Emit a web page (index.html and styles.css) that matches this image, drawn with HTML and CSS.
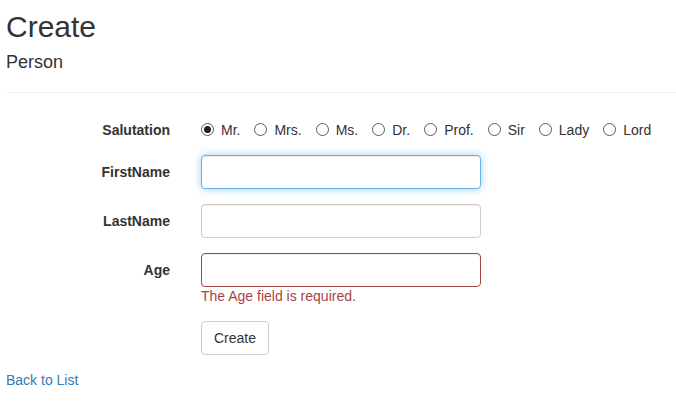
FILE: index.html
```html
<!DOCTYPE html>
<html>
<head>
<meta charset="utf-8">
<title>Create</title>
<link rel="stylesheet" href="styles.css">
</head>
<body>
<h2 class="title">Create</h2>
<h4 class="subtitle">Person</h4>
<hr class="divider">
<form class="form">
  <div class="form-group">
    <label class="control-label">Salutation</label>
    <div class="control radios">
      <span class="radio-item"><span class="radio checked"></span>Mr.</span>
      <span class="radio-item"><span class="radio"></span>Mrs.</span>
      <span class="radio-item"><span class="radio"></span>Ms.</span>
      <span class="radio-item"><span class="radio"></span>Dr.</span>
      <span class="radio-item"><span class="radio"></span>Prof.</span>
      <span class="radio-item"><span class="radio"></span>Sir</span>
      <span class="radio-item"><span class="radio"></span>Lady</span>
      <span class="radio-item"><span class="radio"></span>Lord</span>
    </div>
  </div>
  <div class="form-group">
    <label class="control-label">FirstName</label>
    <div class="control"><input class="form-control focused" type="text"></div>
  </div>
  <div class="form-group">
    <label class="control-label">LastName</label>
    <div class="control"><input class="form-control" type="text"></div>
  </div>
  <div class="form-group">
    <label class="control-label">Age</label>
    <div class="control">
      <input class="form-control invalid" type="text">
      <span class="field-error">The Age field is required.</span>
    </div>
  </div>
  <div class="form-group">
    <span class="control-label"></span>
    <div class="control"><button class="btn" type="button">Create</button></div>
  </div>
</form>
<div class="back"><a class="link" href="#">Back to List</a></div>
</body>
</html>
```
FILE: styles.css
```css
html, body {
  margin: 0;
  padding: 0;
  background: #fff;
}
body {
  padding: 0 0 0 6px;
  font-family: "Liberation Sans", Arial, Helvetica, sans-serif;
  font-size: 14px;
  line-height: 20px;
  color: #333;
}
.title {
  margin: 10px 0 10px;
  font-size: 30px;
  font-weight: 500;
  line-height: 33px;
}
.subtitle {
  margin: 10px 0 10px;
  font-size: 18px;
  font-weight: 500;
  line-height: 19.8px;
}
.divider {
  margin: 19px 0 20px;
  border: 0;
  border-top: 1px solid #eee;
  height: 0;
}
.form-group {
  display: grid;
  grid-template-columns: 164px 1fr;
  column-gap: 31px;
  margin-bottom: 15px;
}
.control-label {
  text-align: right;
  font-weight: bold;
  padding-top: 7px;
}
.radios {
  display: flex;
  gap: 14px;
  padding-top: 7px;
  height: 20px;
}
.radio-item {
  display: inline-flex;
  align-items: center;
}
.radio {
  box-sizing: border-box;
  width: 13px;
  height: 13px;
  border: 1px solid #5a5a5a;
  border-radius: 50%;
  margin-right: 7px;
  display: flex;
  align-items: center;
  justify-content: center;
  background: #fff;
}
.radio.checked::after {
  content: "";
  width: 7px;
  height: 7px;
  border-radius: 50%;
  background: #222;
}
.form-control {
  display: block;
  box-sizing: border-box;
  width: 280px;
  height: 34px;
  padding: 6px 12px;
  font: inherit;
  color: #555;
  background: #fff;
  border: 1px solid #ccc;
  border-radius: 4px;
  box-shadow: inset 0 1px 1px rgba(0,0,0,0.075);
  outline: none;
}
.form-control.focused {
  border-color: #66afe9;
  box-shadow: inset 0 1px 1px rgba(0,0,0,0.075), 0 0 8px rgba(102,175,233,0.6);
}
.form-control.invalid {
  border-color: #a94442;
}
.field-error {
  display: block;
  color: #a94442;
  line-height: 19px;
}
.btn {
  box-sizing: border-box;
  height: 34px;
  padding: 6px 12px;
  font: inherit;
  color: #333;
  background: #fff;
  border: 1px solid #ccc;
  border-radius: 4px;
  cursor: pointer;
}
.back {
  margin: 0;
}
.link {
  color: #337ab7;
  text-decoration: none;
}
```
